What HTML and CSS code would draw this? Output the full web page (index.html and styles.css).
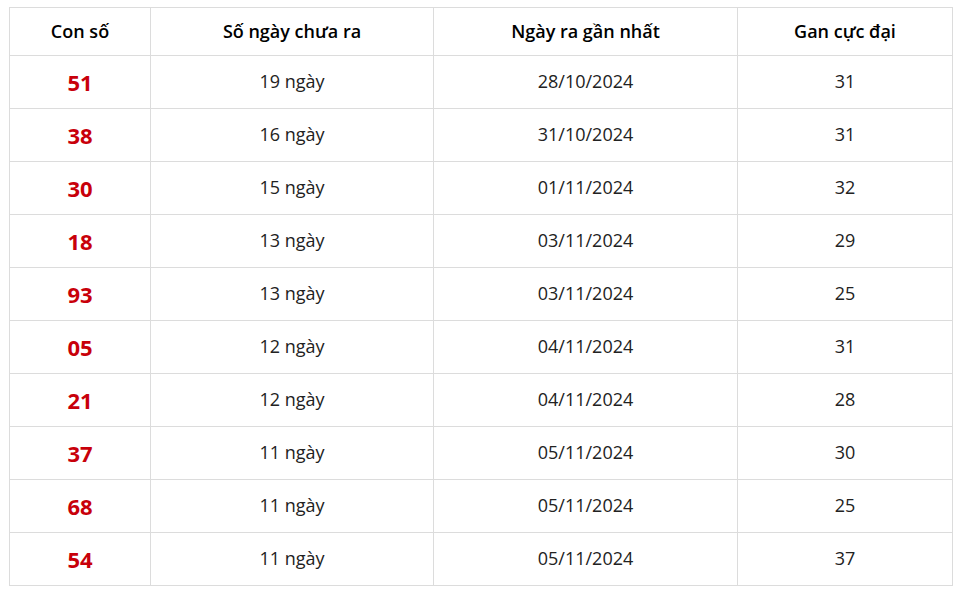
FILE: index.html
```html
<!DOCTYPE html>
<html lang="vi">
<head>
<meta charset="utf-8">
<link rel="stylesheet" href="styles.css">
</head>
<body>
<div class="wrap">
<table class="gan">
  <colgroup>
    <col class="c1"><col class="c2"><col class="c3"><col class="c4">
  </colgroup>
  <thead>
    <tr><th>Con số</th><th>Số ngày chưa ra</th><th>Ngày ra gần nhất</th><th>Gan cực đại</th></tr>
  </thead>
  <tbody>
    <tr><td class="num">51</td><td>19 ngày</td><td>28/10/2024</td><td>31</td></tr>
    <tr><td class="num">38</td><td>16 ngày</td><td>31/10/2024</td><td>31</td></tr>
    <tr><td class="num">30</td><td>15 ngày</td><td>01/11/2024</td><td>32</td></tr>
    <tr><td class="num">18</td><td>13 ngày</td><td>03/11/2024</td><td>29</td></tr>
    <tr><td class="num">93</td><td>13 ngày</td><td>03/11/2024</td><td>25</td></tr>
    <tr><td class="num">05</td><td>12 ngày</td><td>04/11/2024</td><td>31</td></tr>
    <tr><td class="num">21</td><td>12 ngày</td><td>04/11/2024</td><td>28</td></tr>
    <tr><td class="num">37</td><td>11 ngày</td><td>05/11/2024</td><td>30</td></tr>
    <tr><td class="num">68</td><td>11 ngày</td><td>05/11/2024</td><td>25</td></tr>
    <tr><td class="num">54</td><td>11 ngày</td><td>05/11/2024</td><td>37</td></tr>
  </tbody>
</table>
</div>
</body>
</html>
```
FILE: styles.css
```css
html, body {
  margin: 0;
  padding: 0;
  background: #fff;
}
.wrap {
  padding: 7px 0 0 9px;
}
.gan {
  border-collapse: collapse;
  table-layout: fixed;
  width: 943px;
  font-family: "Open Sans", "Noto Sans", sans-serif;
  font-size: 18px;
  line-height: 1.3;
  color: #222;
}
.c1 { width: 141px; }
.c2 { width: 283px; }
.c3 { width: 304px; }
.c4 { width: 215px; }
.gan th, .gan td {
  border: 1px solid #dcdcdc;
  text-align: center;
  vertical-align: middle;
  padding: 0;
}
.gan th {
  height: 47px;
  font-weight: 600;
  color: #000;
}
.gan td {
  height: 52px;
}
.gan td.num {
  color: #c8000a;
  font-weight: 700;
  font-size: 22px;
}
```
